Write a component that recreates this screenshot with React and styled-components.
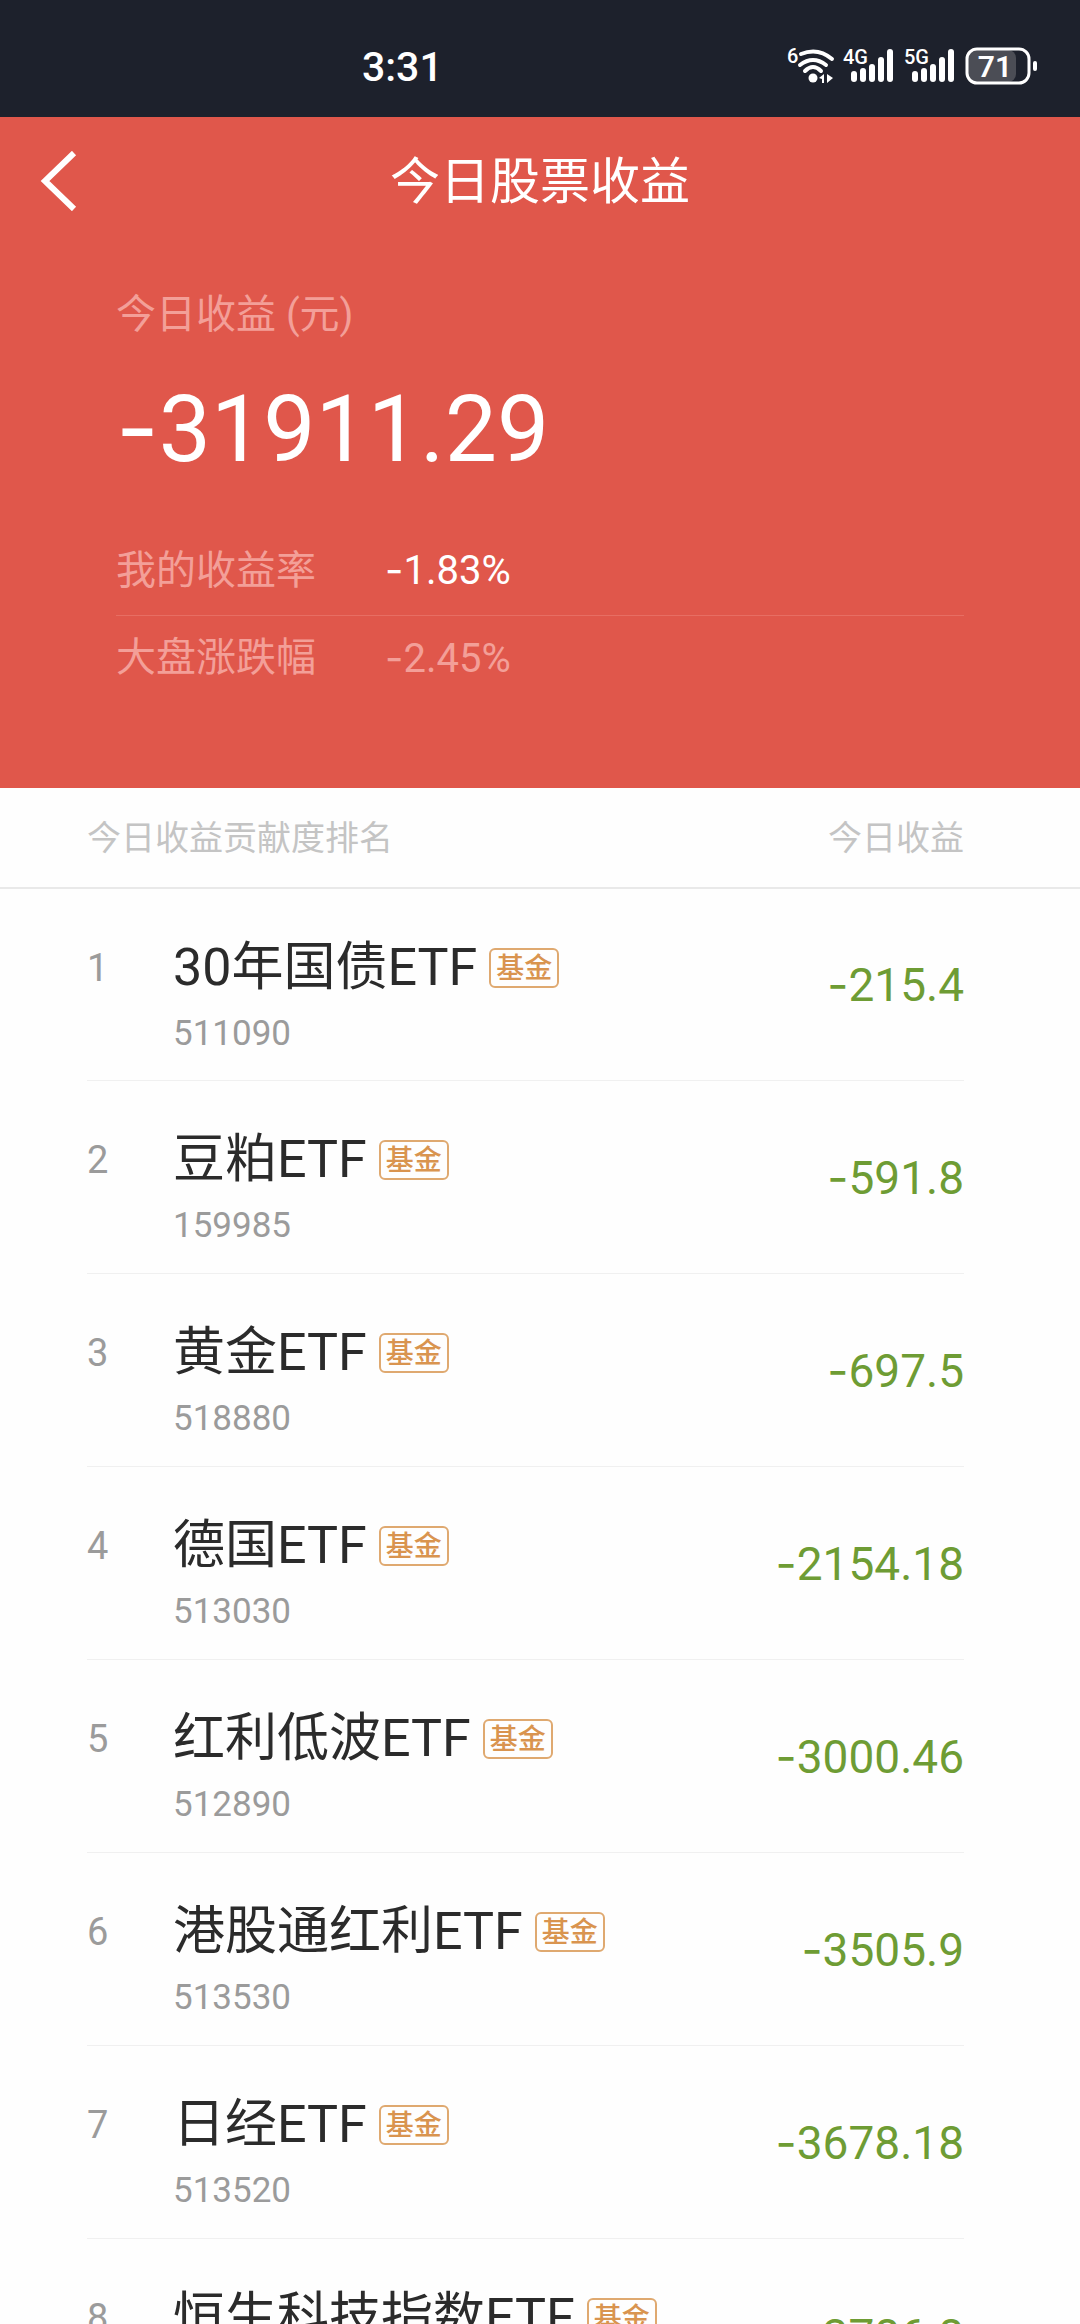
import React from "react";
import styled, { createGlobalStyle } from "styled-components";

const GlobalStyle = createGlobalStyle`
  * {
    box-sizing: border-box;
  }

  html,
  body,
  #root {
    height: 100%;
  }

  body {
    margin: 0;
    background-color: #fefefe;
    font-family: Roboto, "Noto Sans CJK SC", sans-serif;
  }
`;

const Page = styled.div`
  display: flex;
  flex-direction: column;
  height: 100%;
  overflow: hidden;
`;

const StatusBar = styled.div`
  display: flex;
  flex-shrink: 0;
  justify-content: space-between;
  align-items: center;
  height: 117px;
  padding: 16px 43px 0 362px;
  background-color: #1d212c;
  color: white;
`;

const Clock = styled.time`
  font-size: 41px;
  font-weight: 500;
  line-height: 52px;
`;

const StatusIcons = styled.svg`
  display: block;
  width: 250px;
  height: 40px;
  overflow: visible;
`;

const Hero = styled.header`
  flex-shrink: 0;
  padding-bottom: 86px;
  background-color: #e0574b;
  color: white;
`;

const NavBar = styled.nav`
  display: grid;
  grid-template-columns: 120px 1fr 120px;
  align-items: center;
  height: 128px;
`;

const BackButton = styled.button`
  height: 100%;
  padding: 0 0 0 40px;
  border: none;
  background: none;
  color: inherit;
  text-align: left;

  svg {
    display: block;
  }
`;

const Title = styled.h1`
  margin: 0;
  padding-top: 2px;
  font-size: 50px;
  font-weight: 400;
  line-height: 60px;
  text-align: center;
`;

const Summary = styled.section`
  padding: 42px 116px 0;
`;

const SummaryLabel = styled.div`
  color: #f39f98;
  font-size: 40px;
  line-height: 56px;
`;

const SummaryValue = styled.div`
  margin: 28px 0 42px;
  font-size: 93px;
  line-height: 112px;
`;

const RateRow = styled.div`
  display: grid;
  grid-template-columns: 269px 1fr;
  align-items: center;
  height: 87px;
  padding-bottom: 2px;
  color: ${props => (props.$muted ? "#f39f98" : "white")};
  font-size: 40px;
  line-height: 48px;

  & + & {
    border-top: 1px solid #e76e63;
  }
`;

const RateName = styled.span`
  color: #f39f98;
`;

// Roboto's hyphen is too short for a minus sign
const Sign = styled.span`
  font-family: Inter, sans-serif;
`;

const RankTable = styled.table`
  width: 100%;
  border-collapse: collapse;
`;

const HeadRow = styled.tr`
  height: 100px;
  border-bottom: 2px solid #e9e9e9;
  color: #c4c4c4;
  font-size: 34px;
  line-height: 40px;
`;

const HeadCell = styled.th`
  padding: ${props => (props.$right ? "0 116px 0 0" : "0 0 0 87px")};
  font-weight: 400;
  text-align: ${props => (props.$right ? "right" : "left")};
`;

const RankCell = styled.td`
  width: 173px;
  padding: 0 0 0 87px;
  vertical-align: top;
  color: #9b9b9b;
  font-size: 38px;
  line-height: 158px;
`;

const FundCell = styled.td`
  padding: 0;
  vertical-align: top;
`;

const ProfitCell = styled.td`
  padding: 0 116px 2px 0;
  color: #6e9c34;
  font-size: 46px;
  text-align: right;
`;

const FundRow = styled.tr`
  height: 193px;
  background: linear-gradient(#f0f0f0, #f0f0f0) no-repeat 87px 100% / calc(100% - 203px) 1px;
`;

const FundTitle = styled.div`
  display: flex;
  align-items: center;
  gap: 12px;
  height: 60px;
  margin-top: 49px;
`;

const FundName = styled.span`
  color: #2b2b2b;
  font-size: 52px;
  line-height: 60px;
  white-space: nowrap;
`;

const FundTag = styled.span`
  height: 40px;
  padding: 0 5px;
  border: 2px solid #dfa970;
  border-radius: 6px;
  color: #d9944f;
  font-size: 28px;
  font-weight: 500;
  line-height: 37px;
`;

const FundCode = styled.div`
  margin-top: 16px;
  color: #9b9b9b;
  font-size: 35px;
  line-height: 40px;
`;

const funds = [
  { name: "30年国债ETF", code: "511090", profit: "-215.4" },
  { name: "豆粕ETF", code: "159985", profit: "-591.8" },
  { name: "黄金ETF", code: "518880", profit: "-697.5" },
  { name: "德国ETF", code: "513030", profit: "-2154.18" },
  { name: "红利低波ETF", code: "512890", profit: "-3000.46" },
  { name: "港股通红利ETF", code: "513530", profit: "-3505.9" },
  { name: "日经ETF", code: "513520", profit: "-3678.18" },
  { name: "恒生科技指数ETF", code: "513180", profit: "-3786.8" },
];

function Amount({ value }) {
  return (
    <>
      {value.startsWith("-") && <Sign>-</Sign>}
      {value.replace("-", "")}
    </>
  );
}

function SignalBars({ x }) {
  const heights = [11, 14, 18, 25, 33];
  return heights.map((h, i) => (
    <rect key={i} x={x + i * 9} y={35 - h} width="6" height={h} rx="3" />
  ));
}

function SystemIcons() {
  return (
    <StatusIcons viewBox="0 0 250 40" fill="white" fontFamily="Roboto, sans-serif">
      <g fontSize="20" fontWeight="500">
        <text x="0" y="16">6</text>
        <text x="56" y="17">4G</text>
        <text x="117" y="17">5G</text>
      </g>
      <g fill="none" stroke="white" strokeWidth="4" strokeLinecap="round">
        <path d="M14 7 Q31 0 45 12" />
        <path d="M13 18 Q26 8 39 18" />
        <path d="M18 24 Q26 16 34 24" />
      </g>
      <circle cx="26" cy="31" r="4.500" />
      <path d="M32 31 l5 -4 v9 h-2 v-4 z M40 27 l6 4 l-6 5 z" />
      <SignalBars x={64} />
      <SignalBars x={125} />
      <rect x="181" y="3" width="48" height="32" rx="8" fill="#4b4d55" />
      <rect x="180" y="2" width="62" height="34" rx="10" fill="none" stroke="white" strokeWidth="3" />
      <rect x="246" y="14" width="4" height="10" rx="2" />
      <text x="208" y="30" fontSize="30" fontWeight="600" textAnchor="middle">71</text>
    </StatusIcons>
  );
}

function FundItem({ rank, name, code, profit }) {
  return (
    <FundRow>
      <RankCell>{rank}</RankCell>
      <FundCell>
        <FundTitle>
          <FundName>{name}</FundName>
          <FundTag>基金</FundTag>
        </FundTitle>
        <FundCode>{code}</FundCode>
      </FundCell>
      <ProfitCell>
        <Amount value={profit} />
      </ProfitCell>
    </FundRow>
  );
}

export default function App() {
  return (
    <Page>
      <GlobalStyle />
      <StatusBar>
        <Clock>3:31</Clock>
        <SystemIcons />
      </StatusBar>
      <Hero>
        <NavBar>
          <BackButton type="button" aria-label="返回">
            <svg width="38" height="60" viewBox="0 0 38 60" fill="none" stroke="white" strokeWidth="6">
              <path d="M34 2 L5 30 L34 58" />
            </svg>
          </BackButton>
          <Title>今日股票收益</Title>
        </NavBar>
        <Summary>
          <SummaryLabel>今日收益 (元)</SummaryLabel>
          <SummaryValue>
            <Amount value="-31911.29" />
          </SummaryValue>
          <RateRow>
            <RateName>我的收益率</RateName>
            <span><Amount value="-1.83%" /></span>
          </RateRow>
          <RateRow $muted>
            <RateName>大盘涨跌幅</RateName>
            <span><Amount value="-2.45%" /></span>
          </RateRow>
        </Summary>
      </Hero>
      <RankTable>
        <thead>
          <HeadRow>
            <HeadCell colSpan={2}>今日收益贡献度排名</HeadCell>
            <HeadCell $right>今日收益</HeadCell>
          </HeadRow>
        </thead>
        <tbody>
          {funds.map((fund, i) => (
            <FundItem key={fund.code} rank={i + 1} {...fund} />
          ))}
        </tbody>
      </RankTable>
    </Page>
  );
}
